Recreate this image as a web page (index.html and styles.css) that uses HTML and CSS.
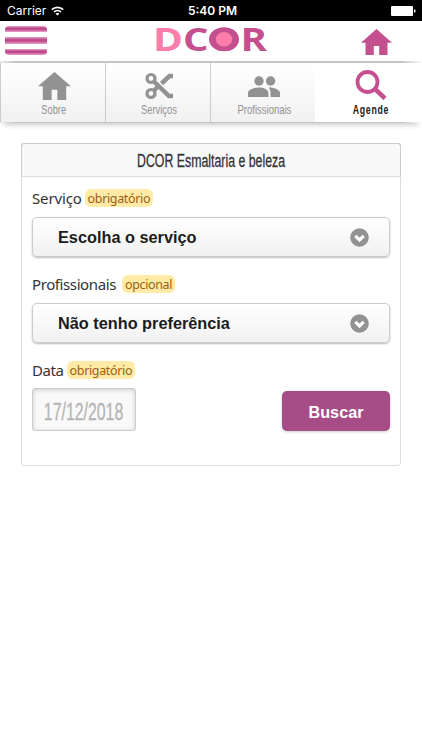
FILE: index.html
```html
<!DOCTYPE html>
<html lang="pt-BR">
<head>
    <meta charset="UTF-8">
    <meta name="viewport" content="width=device-width, initial-scale=1.0">
    <title>DCOR Esmaltaria e beleza</title>
    <link rel="stylesheet" href="styles.css">
</head>
<body>
    <div class="status">
        <div class="carrier">
            <span>Carrier</span>
            <svg width="13" height="10" viewBox="0 0 13 10" fill="none" stroke="#fff" stroke-width="1.7">
                <path d="M.8 3.7a8.2 8.2 0 0 1 11.4 0M3 6a5 5 0 0 1 7 0"/>
                <path d="M6.5 9.6 4.6 7.7a2.7 2.7 0 0 1 3.8 0z" fill="#fff" stroke="none"/>
            </svg>
        </div>
        <span class="clock">5:40 PM</span>
        <svg class="battery" width="25" height="10" viewBox="0 0 25 10" fill="#fff">
            <rect width="22" height="10" rx="1"/>
            <path d="M23 3.2q1.6.2 1.6 1.8T23 6.8z"/>
        </svg>
    </div>

    <header class="header">
        <button type="button" class="menu" aria-label="Menu"><i></i><i></i><i></i></button>
        <svg class="logo" width="118" height="34" viewBox="0 0 118 34">
            <g class="logo-text">
                <text x="0" y="25" textLength="30" fill="#fa7dab" lengthAdjust="spacingAndGlyphs">D</text>
                <text x="30" y="25" textLength="84" fill="#c5508f" lengthAdjust="spacingAndGlyphs">COR</text>
            </g>
            <ellipse cx="71" cy="13.3" rx="15" ry="12" fill="#c5508f"/>
            <ellipse cx="71" cy="13.3" rx="8.200" ry="7.200" fill="#fa7dab"/>
        </svg>
        <svg class="home" width="31" height="27" viewBox="0 0 31 27" fill="#c5508f">
            <path d="M15.500 0 31 13.700h-4.500V26h-8.300v-9h-5.400v9H4.500V13.700H0z"/>
        </svg>
    </header>

    <!-- Main sections -->
    <nav class="tabs">
        <a class="tab">
            <svg width="33" height="28" viewBox="0 0 31 27" preserveAspectRatio="none"><path d="M15.500 0 31 13.700h-4.500V27h-8.300v-10h-5.400v10H4.500V13.700H0z"/></svg>
            <span class="tab-sobre">Sobre</span>
        </a>
        <a class="tab">
            <svg width="28" height="28" viewBox="0 0 28 28" fill="none" stroke="#929292" stroke-width="3.200">
                <circle cx="6" cy="6.500" r="4"/>
                <circle cx="6" cy="21.500" r="4"/>
                <path d="M8.500 9 24 24h4M8.500 19l5-5M16.500 11.500 24.500 4H28" stroke-width="4.500"/>
            </svg>
            <span class="tab-servicos">Serviços</span>
        </a>
        <a class="tab">
            <svg width="33" height="28" viewBox="0 0 33 28">
                <circle cx="11" cy="9" r="4.700"/><circle cx="22.600" cy="9" r="4.700"/>
                <path d="M0 25v-4c0-3.500 6-5.500 10.800-5.500S20.500 17.500 20.500 21v4zM20.500 15.600c5.500-.3 11.500 2.300 11.500 5.400v4h-9.500v-4c0-2.200-.5-3.900-2-5.400z"/>
            </svg>
            <span class="tab-prof">Profissionais</span>
        </a>
        <a class="tab active">
            <svg width="32" height="30" viewBox="0 0 32 30" fill="none" stroke="#c5508f">
                <circle cx="12.500" cy="12" r="10" stroke-width="3.800"/>
                <path d="m20 19 10 9.500" stroke-width="4.500"/>
            </svg>
            <span class="tab-agende">Agende</span>
        </a>
    </nav>

    <main class="card">
        <h1 class="card-title"><span>DCOR Esmaltaria e beleza</span></h1>
        <form class="form">
            <div class="label">Serviço <span class="badge">obrigatório</span></div>
            <button type="button" class="select">
                <span>Escolha o serviço</span>
                <svg width="19" height="19" viewBox="0 0 19 19"><circle cx="9.500" cy="9.500" r="9.300" fill="#929292"/><path d="m5.300 7.800 4.200 4.200 4.200-4.200" fill="none" stroke="#fff" stroke-width="3.200"/></svg>
            </button>
            <div class="label label-prof">Profissionais <span class="badge">opcional</span></div>
            <button type="button" class="select">
                <span>Não tenho preferência</span>
                <svg width="19" height="19" viewBox="0 0 19 19"><circle cx="9.500" cy="9.500" r="9.300" fill="#929292"/><path d="m5.300 7.800 4.200 4.200 4.200-4.200" fill="none" stroke="#fff" stroke-width="3.200"/></svg>
            </button>
            <div class="label label-data">Data <span class="badge">obrigatório</span></div>
            <div class="row">
                <div class="date"><span>17/12/2018</span></div>
                <button type="button" class="submit">Buscar</button>
            </div>
        </form>
    </main>
</body>
</html>
```

FILE: styles.css
```css
* {
    box-sizing: border-box;
}

body {
    margin: 0;
    background: #fff;
    color: #333;
    font-family: "Liberation Sans", Arial, sans-serif;
}

button {
    margin: 0;
    padding: 0;
    border: 0;
    font-family: inherit;
}

svg {
    display: block;
    flex: none;
}

.status {
    display: grid;
    grid-template-columns: 1fr auto 1fr;
    align-items: center;
    height: 21px;
    padding: 1px 6px 0 7px;
    background: #000;
    color: #fff;
    font: 12px/20px Inter, sans-serif;
}

.carrier {
    display: flex;
    align-items: center;
    gap: 5px;
}

.clock {
    padding-left: 2px;
    font-weight: 600;
}

.battery {
    justify-self: end;
}

.header {
    display: flex;
    align-items: flex-start;
    height: 40px;
    padding: 5px 30px 0 5px;
}

.menu {
    display: flex;
    flex-direction: column;
    justify-content: space-between;
    width: 42px;
    height: 29px;
    background: none;
}

.menu i {
    height: 7px;
    background: linear-gradient(#e3a5c8, #bc4288 40%, #c5508f 60%, #e3a5c8);
}

.menu i:first-child {
    height: 6px;
    border-radius: 4px 4px 0 0;
}

.menu i:last-child {
    height: 6px;
    border-radius: 0 0 4px 4px;
}

.logo {
    margin-left: 106px;
    overflow: visible;
}

.logo-text {
    font: bold 32px "Open Sans", sans-serif;
}

.home {
    margin: 3px 0 0 auto;
}

.tabs {
    display: grid;
    grid-template-columns: repeat(3, 105px) 1fr;
    height: 62px;
    border-top: 2px solid;
    border-bottom: 1px solid;
    border-image: linear-gradient(90deg, #eee, #c4c4c4 4%, #c4c4c4 95%, #fff) 1;
    box-shadow: 0 6px 5px -4px #ccc;
}

.tab {
    display: flex;
    flex-direction: column;
    align-items: center;
    justify-content: space-between;
    padding: 9px 0 5px 2px;
    border-left: 1px solid #ccc;
    background: linear-gradient(#fff, #f1f1f1);
    color: #929292;
    fill: #929292;
    font-size: 12.500px;
    line-height: 14px;
}

.tab span,
.card-title span,
.date span {
    display: inline-block;
    white-space: nowrap;
}

.tab-sobre {
    transform: scaleX(.74);
}

.tab-servicos {
    transform: scaleX(.75);
}

.tab-prof {
    transform: scaleX(.76);
}

.tab.active {
    padding-top: 7px;
    padding-left: 4px;
    border-left: 0;
    background: #fff;
    color: #222;
    font-weight: bold;
}

.tab-agende {
    letter-spacing: 1px;
    transform: scaleX(.7);
}

.card {
    width: 380px;
    height: 323px;
    margin: 20px 0 0 21px;
    border: 1px solid #ddd;
    border-radius: 3px;
}

.card-title {
    height: 34px;
    margin: -1px -1px 0;
    border: 1px solid #ccc;
    border-bottom-color: #ddd;
    border-radius: 3px 3px 0 0;
    background: #f9f9f9;
    font-size: 17.500px;
    font-weight: normal;
    line-height: 34px;
    text-align: center;
}

.card-title span {
    margin: 0 -40px;
    transform: scaleX(.705);
    -webkit-text-stroke: .3px #333;
}

.form {
    padding: 11px 10px 0;
}

.label {
    display: flex;
    align-items: center;
    gap: 3px;
    height: 20px;
    font: 15px/20px "Noto Sans", sans-serif;
    letter-spacing: -.15px;
}

.label-prof {
    gap: 6px;
    margin-top: 17px;
    letter-spacing: -.4px;
}

.label-data {
    margin-top: 17px;
    letter-spacing: -.4px;
}

.badge {
    height: 18px;
    padding: 0 3px;
    border-radius: 6px;
    background: #ffeaa6;
    color: #9c6014;
    font-size: 12.500px;
    line-height: 19px;
    letter-spacing: -.35px;
}

.select {
    display: flex;
    align-items: center;
    justify-content: space-between;
    width: 100%;
    height: 40px;
    margin-top: 9px;
    padding: 1px 20px 0 25px;
    border: 1px solid #ccc;
    border-radius: 5px;
    background: linear-gradient(#fff, #f1f1f1);
    box-shadow: 0 1px 2px #bbb;
    color: #1c1c1c;
    font-size: 16.300px;
    font-weight: bold;
}

.row {
    display: flex;
    align-items: flex-end;
    justify-content: space-between;
    margin-top: 8px;
}

.date {
    width: 104px;
    height: 43px;
    border: 1px solid #ccc;
    border-radius: 3px;
    background: #f9f9f9;
    box-shadow: inset 0 1px 4px #ccc;
    color: #b5b5b5;
    font-size: 23px;
    line-height: 46px;
    text-align: center;
}

.date span {
    margin: 0 -20px;
    transform: scaleX(.69);
    -webkit-text-stroke: .3px #b5b5b5;
}

.submit {
    width: 108px;
    height: 40px;
    padding-top: 2px;
    border-radius: 5px;
    background: #a64d87;
    box-shadow: 0 1px 3px #ccc;
    color: #fff;
    font-size: 16.200px;
    font-weight: bold;
}
```
